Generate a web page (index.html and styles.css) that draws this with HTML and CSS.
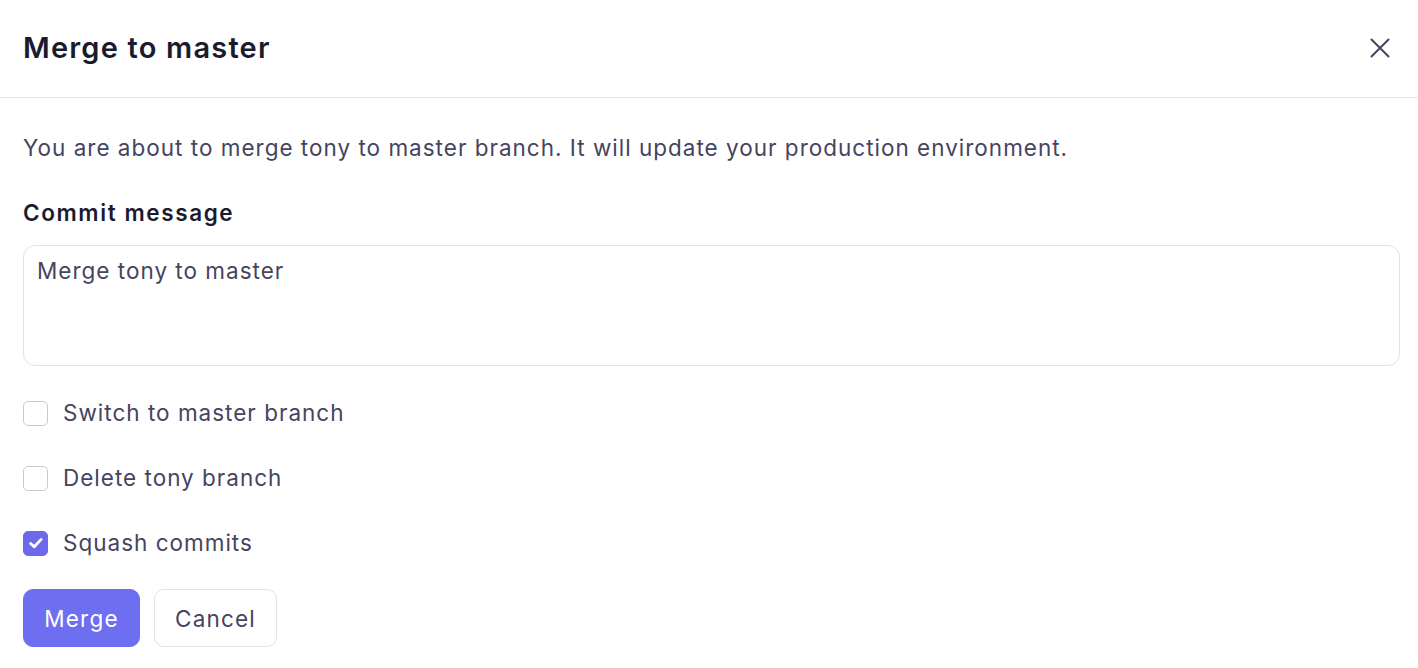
FILE: index.html
```html
<!DOCTYPE html>
<html lang="en">
<head>
<meta charset="utf-8">
<title>Merge to master</title>
<link rel="stylesheet" href="styles.css">
</head>
<body>
<div class="dialog">
  <header class="dialog-header">
    <h1 class="dialog-title">Merge to master</h1>
    <button class="close-btn" aria-label="Close">
      <svg width="20" height="20" viewBox="0 0 20 20" fill="none" stroke="currentColor" stroke-width="2" stroke-linecap="round"><path d="M1.5 1.5L18.5 18.5M18.5 1.5L1.5 18.5"/></svg>
    </button>
  </header>
  <div class="dialog-body">
    <p class="desc">You are about to merge tony to master branch. It will update your production environment.</p>
    <label class="field-label" for="msg">Commit message</label>
    <textarea id="msg" class="textarea">Merge tony to master</textarea>
    <div class="options">
      <label class="option"><span class="box"></span><span>Switch to master branch</span></label>
      <label class="option"><span class="box"></span><span>Delete tony branch</span></label>
      <label class="option"><span class="box checked"><svg width="18" height="18" viewBox="0 0 18 18" fill="none" stroke="#fff" stroke-width="2.8" stroke-linecap="round" stroke-linejoin="round"><path d="M3.6 9.4L7.2 12.8L14.2 5.4"/></svg></span><span>Squash commits</span></label>
    </div>
    <div class="actions">
      <button class="btn btn-primary">Merge</button>
      <button class="btn btn-secondary">Cancel</button>
    </div>
  </div>
</div>
</body>
</html>
```
FILE: styles.css
```css
* { box-sizing: border-box; }
html, body { margin: 0; padding: 0; background: #fff; }
body {
  font-family: Inter, "Noto Sans", sans-serif;
  color: #46445f;
  width: 1418px;
  height: 668px;
  overflow: hidden;
}
.dialog { width: 100%; }
.dialog-header {
  height: 98px;
  border-bottom: 1px solid #e4e4e7;
  display: flex;
  align-items: center;
  justify-content: space-between;
  padding: 0 28px 2px 23px;
}
.dialog-title {
  margin: 0;
  font-size: 29px;
  font-weight: 600;
  color: #1b1b2f;
  letter-spacing: 1.2px;
}
.close-btn {
  border: 0;
  background: none;
  padding: 0;
  color: #46445f;
  display: flex;
  cursor: pointer;
}
.dialog-body {
  padding: 33px 18px 0 23px;
  display: flex;
  flex-direction: column;
}
.desc {
  margin: 0;
  font-size: 22.5px;
  line-height: 34px;
  letter-spacing: 1px;
}
.field-label {
  margin-top: 31px;
  font-size: 22.5px;
  font-weight: 600;
  color: #1b1b2f;
  line-height: 34px;
  letter-spacing: 1.6px;
}
.textarea {
  margin-top: 15px;
  height: 121px;
  width: 100%;
  border: 1px solid #e2e2e6;
  border-radius: 12px;
  padding: 8px 13px;
  font-family: inherit;
  font-size: 22.5px;
  line-height: 34px;
  letter-spacing: 1px;
  color: #46445f;
  resize: none;
  outline: none;
}
.options {
  margin-top: 30px;
  display: flex;
  flex-direction: column;
  gap: 31px;
}
.option {
  display: flex;
  align-items: center;
  gap: 15px;
  font-size: 22.5px;
  line-height: 34px;
  letter-spacing: 1px;
}
.box {
  width: 25px;
  height: 25px;
  border: 1.5px solid #c9c9cf;
  border-radius: 5px;
  display: flex;
  align-items: center;
  justify-content: center;
  background: #fff;
}
.box.checked {
  background: #6c6aea;
  border-color: #6c6aea;
}
.actions {
  margin-top: 29px;
  display: flex;
  gap: 14px;
}
.btn {
  height: 58px;
  border-radius: 10px;
  font-family: inherit;
  font-size: 22.5px;
  letter-spacing: 1.2px;
  padding: 0;
  cursor: pointer;
}
.btn-primary {
  width: 117px;
  background: #6e6ef0;
  border: 1px solid #6e6ef0;
  color: #fff;
}
.btn-secondary {
  width: 123px;
  background: #fff;
  border: 1px solid #e2e2e6;
  color: #46445f;
}
```
